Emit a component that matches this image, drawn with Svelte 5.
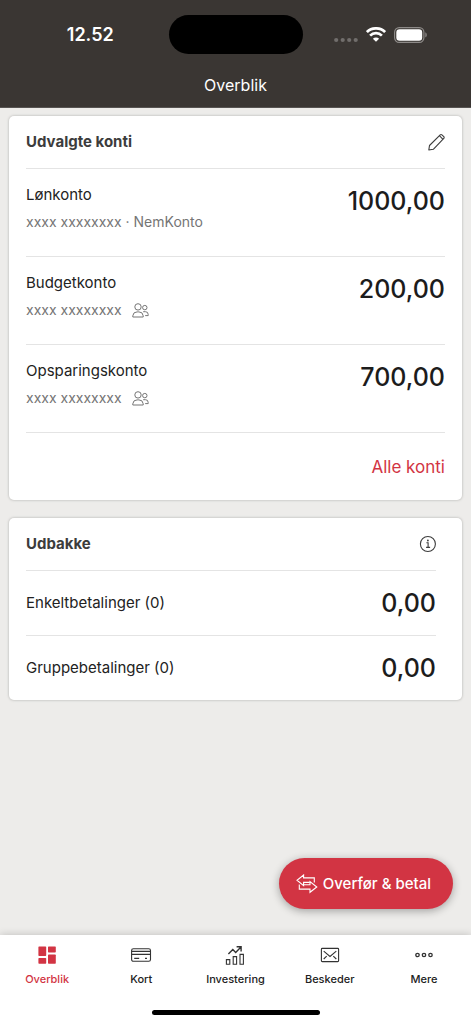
<script>
  const accounts = [
    { name: 'Lønkonto', number: 'xxxx xxxxxxxx · NemKonto', shared: false, amount: '1000,00' },
    { name: 'Budgetkonto', number: 'xxxx xxxxxxxx', shared: true, amount: '200,00' },
    { name: 'Opsparingskonto', number: 'xxxx xxxxxxxx', shared: true, amount: '700,00' }
  ];

  const outbox = [
    { name: 'Enkeltbetalinger (0)', amount: '0,00' },
    { name: 'Gruppebetalinger (0)', amount: '0,00' }
  ];

  const tabs = [
    { id: 'overview', label: 'Overblik' },
    { id: 'cards', label: 'Kort' },
    { id: 'invest', label: 'Investering' },
    { id: 'messages', label: 'Beskeder' },
    { id: 'more', label: 'Mere' }
  ];

  let active = $state('overview');
</script>

<div class="app">
  <header>
    <div class="status">
      <span class="time">12.52</span>
      <span class="island"></span>
      <span class="signals">
        <svg width="24" height="6" viewBox="0 0 24 6" fill="#716e6c" aria-hidden="true">
          <circle cx="2.2" cy="3" r="2.1" /><circle cx="8.7" cy="3" r="2.1" /><circle cx="15.2" cy="3" r="2.1" /><circle cx="21.7" cy="3" r="2.1" />
        </svg>
        <svg width="20" height="15" viewBox="0 0 20 15" fill="none" stroke="#fff" aria-hidden="true">
          <path d="M0.9 5.1a13 13 0 0 1 18.2 0" stroke-width="2.8" />
          <path d="M4.1 8.6a8.3 8.3 0 0 1 11.8 0" stroke-width="2.7" />
          <path d="M10 14.8l-3.1-3.1a4.4 4.4 0 0 1 6.2 0z" fill="#fff" stroke="none" />
        </svg>
        <svg width="34" height="16" viewBox="0 0 34 16" aria-hidden="true">
          <rect x="0.6" y="0.6" width="29.3" height="14.8" rx="4.6" fill="none" stroke="#8d8a88" stroke-width="1.2" />
          <rect x="2.3" y="2.3" width="25.9" height="11.4" rx="3.2" fill="#fff" />
          <path d="M31.3 5.3a3 3 0 0 1 0 5.2z" fill="#8d8a88" />
        </svg>
      </span>
    </div>
    <h1>Overblik</h1>
  </header>

  <main>
    <section class="card">
      <div class="head">
        <h2>Udvalgte konti</h2>
        <button aria-label="Rediger">
          <svg width="18" height="18" viewBox="0 0 18 18" fill="none" stroke="#3c3c3c" stroke-width="1.1" stroke-linejoin="round">
            <path d="M1.8 17l0.7-4.5L13.2 1.8a1.2 1.2 0 0 1 1.7 0l1.9 1.9a1.2 1.2 0 0 1 0 1.7L6.3 16.3z" />
            <path d="M12.4 2.7l3.6 3.6" />
          </svg>
        </button>
      </div>
      {#each accounts as account}
        <div class="account">
          <div class="info">
            <span class="name">{account.name}</span>
            <span class="number">
              {account.number}
              {#if account.shared}
                <svg width="17" height="15" viewBox="0 0 17 15" fill="none" stroke="#757575" aria-hidden="true">
                  <circle cx="6" cy="3.9" r="3.2" />
                  <path d="M0.8 14v-1.2a4.3 4.3 0 0 1 4.3-3.9h1.8a4.3 4.3 0 0 1 4.3 3.9V14z" stroke-linejoin="round" />
                  <circle cx="12.8" cy="4.6" r="2.2" />
                  <path d="M11.2 8.7h2.2a2.8 2.8 0 0 1 2.8 2.8v1.1h-3" />
                </svg>
              {/if}
            </span>
          </div>
          <span class="amount">{account.amount}</span>
        </div>
      {/each}
      <div class="all"><a href="#konti">Alle konti</a></div>
    </section>

    <section class="card outbox">
      <div class="head">
        <h2>Udbakke</h2>
        <button aria-label="Information">
          <svg width="17" height="18" viewBox="0 0 17 18" fill="none" stroke="#3c3c3c" stroke-width="1.1">
            <circle cx="8.9" cy="9" r="7.5" />
            <path d="M7.4 7.8h1.7v4.5M7.1 12.4h4" />
            <circle cx="8.9" cy="5.5" r="0.9" fill="#3c3c3c" stroke="none" />
          </svg>
        </button>
      </div>
      {#each outbox as item}
        <div class="payment">
          <span class="name">{item.name}</span>
          <span class="amount">{item.amount}</span>
        </div>
      {/each}
    </section>

    <button class="transfer">
      <svg width="22" height="20" viewBox="0 0 22 20" fill="none" stroke="#fff" stroke-width="1.1" aria-hidden="true">
        <path d="M18.3 8.4V3.9H7.6V1L1 6.3l6.6 5.3V8.4h6.2" />
        <path d="M3.3 10.6v4.5h10.7v3.2L20.8 13 14 7.6v3.2H7.6" />
      </svg>
      Overfør &amp; betal
    </button>
  </main>

  <nav>
    <div class="tabs">
      {#each tabs as tab}
        <button class:active={active === tab.id} aria-current={active === tab.id ? 'page' : undefined} onclick={() => (active = tab.id)}>
          <svg width="22" height="20" viewBox="0 0 22 20" fill="none" stroke="#333" stroke-width="1.1" aria-hidden="true">
            {#if tab.id === 'overview'}
              <g fill="currentColor" stroke="none">
                <rect x="2.4" y="1.4" width="7.8" height="9.6" rx="0.7" />
                <rect x="12" y="1.4" width="7.8" height="6" rx="0.7" />
                <rect x="2.4" y="13" width="7.8" height="5.8" rx="0.7" />
                <rect x="12" y="9.6" width="7.8" height="9.2" rx="0.7" />
              </g>
            {:else if tab.id === 'cards'}
              <rect x="1.6" y="3.7" width="18.9" height="12.6" rx="1.8" />
              <path d="M1.6 6.4h18.9M1.6 9.4h18.9M4.2 13.4h5M15 13.4h2" />
            {:else if tab.id === 'invest'}
              <path d="M2.4 14.6h3.4v4.6H2.4zM9.2 11.6h3.4v7.6H9.2zM16 9.4h3.4v9.8H16z" />
              <path d="M4.4 9l4.4-4.4 2.9 3 5-5.3M12.6 1.8h4.5v4.6" stroke-width="1.4" />
            {:else if tab.id === 'messages'}
              <rect x="2.4" y="3.4" width="17.2" height="13.2" rx="0.9" />
              <path d="M4.7 6.2l6.3 5.3 6.3-5.3M4.7 14l3-2.8M17.3 14l-3-2.8" />
            {:else}
              <g stroke-width="1.3">
                <circle cx="4.5" cy="10" r="1.7" /><circle cx="11" cy="10" r="1.7" /><circle cx="17.5" cy="10" r="1.7" />
              </g>
            {/if}
          </svg>
          <span>{tab.label}</span>
        </button>
      {/each}
    </div>
    <span class="home"></span>
  </nav>
</div>

<style>
  :global(body) {
    background: #edecea;
  }

  .app {
    display: flex;
    flex-direction: column;
    min-height: 100vh;
    color: #222;
    font-family: Inter, 'Liberation Sans', sans-serif;
    font-size: 15px;
    line-height: 20px;
  }

  h1,
  h2 {
    margin: 0;
  }

  button {
    padding: 0;
    border: 0;
    background: none;
    color: inherit;
    font: inherit;
    cursor: pointer;
  }

  svg {
    display: block;
    flex: none;
  }

  header {
    padding: 15px 0 12px;
    border-bottom: 1px solid #575452;
    background: #3a3633;
    color: #fff;
  }

  .status {
    display: grid;
    grid-template-columns: 1fr 134px 1fr;
    align-items: center;
  }

  .time {
    padding-left: 12px;
    font-size: 18px;
    font-weight: 600;
    text-align: center;
  }

  .island {
    height: 39px;
    border-radius: 20px;
    background: #000;
  }

  .signals {
    display: flex;
    align-items: center;
    justify-content: center;
    gap: 8px;
    padding-right: 12px;
  }

  .signals svg:first-child {
    align-self: flex-end;
  }

  h1 {
    padding-top: 21px;
    font-size: 16px;
    font-weight: 400;
    text-align: center;
  }

  main {
    display: flex;
    flex: 1;
    flex-direction: column;
    padding: 8px 9px 26px;
  }

  .card {
    padding: 0 17px;
    border-radius: 5px;
    background: #fff;
    box-shadow: 0 0 2px 1px #cfcecc;
  }

  .outbox {
    margin-top: 18px;
    padding-right: 26px;
  }

  .head {
    display: flex;
    align-items: center;
    justify-content: space-between;
    height: 52px;
  }

  h2 {
    color: #3c3c3c;
    font-size: 15px;
    font-weight: 700;
  }

  .account {
    display: flex;
    justify-content: space-between;
    height: 87px;
    border-top: 1px solid #e4e4e4;
  }

  .info {
    display: flex;
    flex-direction: column;
    gap: 7px;
    padding-top: 16px;
  }

  .number {
    display: flex;
    align-items: center;
    gap: 10px;
    color: #757575;
    font-size: 14px;
  }

  .amount {
    color: #1c1c1c;
    font-size: 25px;
    font-weight: 500;
    line-height: 32px;
  }

  .account .amount {
    padding-top: 16px;
  }

  .all {
    display: flex;
    align-items: center;
    justify-content: flex-end;
    height: 67px;
    border-top: 1px solid #e4e4e4;
  }

  .all a {
    color: #d23443;
    font-size: 17px;
    text-decoration: none;
  }

  .payment {
    display: flex;
    align-items: center;
    justify-content: space-between;
    height: 64px;
    border-top: 1px solid #e4e4e4;
  }

  .transfer {
    display: flex;
    align-items: center;
    align-self: flex-end;
    gap: 5px;
    height: 51px;
    margin: auto 9px 0 0;
    padding: 0 22px 0 17px;
    border-radius: 26px;
    background: #d23443;
    box-shadow: 0 2px 8px rgb(0 0 0 / 32%);
    color: #fff;
    font-weight: 500;
  }

  nav {
    display: flex;
    flex-direction: column;
    padding: 10px 0 9px;
    background: #fff;
    box-shadow: 0 0 8px rgb(0 0 0 / 20%);
  }

  .tabs {
    display: grid;
    grid-template-columns: repeat(5, 1fr);
  }

  .tabs button {
    display: flex;
    flex-direction: column;
    align-items: center;
    gap: 6px;
    color: #222;
    font-size: 11px;
    font-weight: 500;
    line-height: 16px;
  }

  .tabs .active {
    color: #d23443;
  }

  .home {
    align-self: center;
    width: 168px;
    height: 5px;
    margin-top: 23px;
    border-radius: 3px;
    background: #000;
  }
</style>
